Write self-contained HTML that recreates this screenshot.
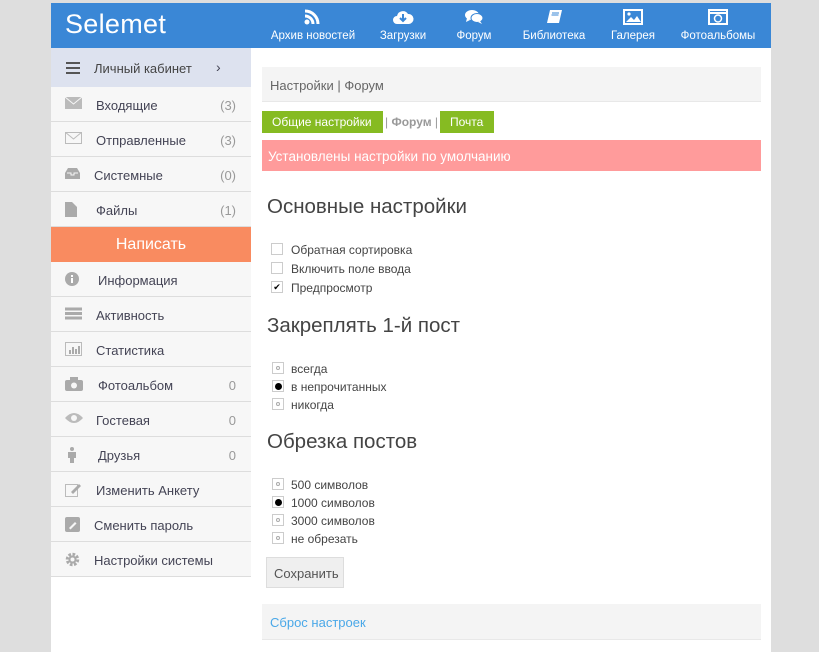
<!DOCTYPE html><html><head><meta charset="utf-8"><style>
*{box-sizing:border-box;margin:0;padding:0}
body{width:819px;height:652px;background:#dedede;font-family:"Liberation Sans",sans-serif;position:relative;overflow:hidden;color:#555}
.a{position:absolute}
#hdr{left:51px;top:3px;width:720px;height:45px;background:#3a87d6}
#logo{left:14px;top:6px;color:#fff;font-size:27px;font-weight:normal;letter-spacing:.3px}
.nav{top:0;text-align:center;color:#fff;font-size:11.5px}
.nav svg{display:block;margin:6px auto 5px}
#side{left:51px;top:48px;width:200px;height:604px;background:#fff}
#main{left:251px;top:48px;width:520px;height:604px;background:#fff}
.row{position:absolute;left:0;width:200px;height:35px;background:#f7f7f7;border-bottom:1px solid #ddd;font-size:13px;color:#445}
.row span.t{position:absolute;left:45px;top:11px}
.row span.c{position:absolute;right:15px;top:11px;color:#999}
.row svg{position:absolute;left:14px;top:10px}
.cb{position:absolute;left:271px;width:12px;height:12px;border:1px solid #ccc;background:#fff;font-size:9px;line-height:10px;text-align:center;color:#000}
.rd{position:absolute;left:272px;width:12px;height:12px;border:1px solid #ccc;background:#fff}
.rd i{position:absolute;left:3px;top:3px;width:4px;height:4px;border:1px solid #aaa;border-radius:50%}
.rd b{position:absolute;left:2px;top:2px;width:7px;height:7px;background:#000;border-radius:50%}
.lb{position:absolute;left:291px;font-size:12px;color:#444}
h2{position:absolute;left:267px;font-weight:normal;font-size:20.5px;color:#444}
</style></head><body>
<div class="a" id="hdr">
<div class="a" id="logo">Selemet</div>
<div class="a nav" style="left:212px;width:100px"><svg width="18" height="16" viewBox="0 0 18 16"><circle cx="3" cy="13" r="2.5" fill="#fff"/><path d="M1 7a8 8 0 0 1 8 8M1 2a13 13 0 0 1 13 13" stroke="#fff" stroke-width="3" fill="none"/></svg>Архив новостей</div>
<div class="a nav" style="left:322px;width:60px"><svg width="22" height="16" viewBox="0 0 22 16"><path d="M5 15a4 4 0 0 1 0-8a6 6 0 0 1 11-2a5 5 0 0 1 1 10z" fill="#fff"/><path d="M11 5v6M8 9l3 3 3-3" stroke="#3a87d6" stroke-width="2" fill="none"/></svg>Загрузки</div>
<div class="a nav" style="left:398px;width:50px"><svg width="20" height="16" viewBox="0 0 20 16"><ellipse cx="8" cy="6" rx="7" ry="5" fill="#fff"/><ellipse cx="13" cy="9" rx="6" ry="4.5" fill="#fff" stroke="#3a87d6" stroke-width="1"/><path d="M3 9l-1 4 4-2M16 12l2 3-4-2" fill="#fff"/></svg>Форум</div>
<div class="a nav" style="left:468px;width:70px"><svg width="18" height="16" viewBox="0 0 18 16"><path d="M5 1h12l-3 13H2z" fill="#fff"/><path d="M7 4h7M6.5 6h7" stroke="#3a87d6"/></svg>Библиотека</div>
<div class="a nav" style="left:557px;width:50px"><svg width="20" height="16" viewBox="0 0 20 16"><rect x="1" y="1" width="18" height="14" fill="none" stroke="#fff" stroke-width="2"/><circle cx="6" cy="5" r="1.6" fill="#fff"/><path d="M3 13l5-5 3 3 3-4 4 6z" fill="#fff"/></svg>Галерея</div>
<div class="a nav" style="left:627px;width:80px"><svg width="20" height="16" viewBox="0 0 20 16"><rect x="1" y="1" width="18" height="14" fill="none" stroke="#fff" stroke-width="2"/><path d="M1 4h18" stroke="#fff" stroke-width="2"/><circle cx="10" cy="9.5" r="3.5" fill="none" stroke="#fff" stroke-width="1.5"/></svg>Фотоальбомы</div>
</div>
<div class="a" id="side">
<div class="row" style="top:0;height:39px;background:#dde2ef;border:none"><svg width="14" height="12" style="left:15px;top:14px"><path d="M0 1h14M0 6h14M0 11h14" stroke="#555" stroke-width="2"/></svg><span class="t" style="left:43px;top:13px;color:#444">Личный кабинет</span><span class="a" style="left:165px;top:11px;font-size:14px">›</span></div>
<div class="row" style="top:39px"><svg width="17" height="12"><rect width="17" height="12" fill="#bbb"/><path d="M0 0l8.5 7 8.5-7" stroke="#f7f7f7" fill="none"/></svg><span class="t">Входящие</span><span class="c">(3)</span></div>
<div class="row" style="top:74px"><svg width="17" height="12"><rect x=".5" y=".5" width="16" height="11" fill="none" stroke="#bbb"/><path d="M0 0l8.5 7 8.5-7" stroke="#bbb" fill="none"/></svg><span class="t">Отправленные</span><span class="c">(3)</span></div>
<div class="row" style="top:109px"><svg width="15" height="13"><path d="M0 6l3-5h9l3 5v6H0z" fill="#aaa"/><path d="M2 6h4v2h3V6h4" stroke="#f7f7f7" fill="none"/></svg><span class="t" style="left:43px">Системные</span><span class="c">(0)</span></div>
<div class="row" style="top:144px"><svg width="12" height="15"><path d="M0 0h7l5 5v10H0z" fill="#aaa"/></svg><span class="t">Файлы</span><span class="c">(1)</span></div>
<div class="row" style="top:179px;background:#f98b60;border:none"><span class="a" style="left:0;width:200px;text-align:center;top:9px;font-size:16px;color:#fff">Написать</span></div>
<div class="row" style="top:214px"><svg width="14" height="14"><circle cx="7" cy="7" r="7" fill="#aaa"/><rect x="6" y="6" width="2" height="5" fill="#fff"/><rect x="6" y="3" width="2" height="2" fill="#fff"/></svg><span class="t" style="left:47px">Информация</span></div>
<div class="row" style="top:249px"><svg width="17" height="13"><path d="M0 2h17M0 6.5h17M0 11h17" stroke="#aaa" stroke-width="3"/></svg><span class="t">Активность</span></div>
<div class="row" style="top:284px"><svg width="17" height="14"><rect x=".5" y=".5" width="16" height="13" fill="none" stroke="#bbb"/><path d="M5 12V8M8 12V5M11 12V7M14 12V4" stroke="#aaa" stroke-width="2"/></svg><span class="t">Статистика</span></div>
<div class="row" style="top:319px"><svg width="18" height="14"><rect y="3" width="18" height="11" rx="2" fill="#aaa"/><rect x="5" y="0" width="8" height="4" fill="#aaa"/><circle cx="9" cy="8.5" r="3" fill="#f7f7f7"/></svg><span class="t" style="left:47px">Фотоальбом</span><span class="c">0</span></div>
<div class="row" style="top:354px"><svg width="18" height="12"><path d="M0 6q9-10 18 0q-9 10-18 0z" fill="#bbb"/><circle cx="9" cy="6" r="3" fill="#f7f7f7"/></svg><span class="t">Гостевая</span><span class="c">0</span></div>
<div class="row" style="top:389px"><svg width="10" height="16" style="left:16px"><circle cx="5" cy="2" r="2" fill="#aaa"/><path d="M1 5h8v6H7v5H3v-5H1z" fill="#aaa"/></svg><span class="t" style="left:47px">Друзья</span><span class="c">0</span></div>
<div class="row" style="top:424px"><svg width="17" height="15"><rect x=".5" y="2.5" width="12" height="12" fill="none" stroke="#bbb"/><path d="M6 10l8-8 2 2-8 8z" fill="#aaa"/></svg><span class="t">Изменить Анкету</span></div>
<div class="row" style="top:459px"><svg width="15" height="15"><rect width="15" height="15" rx="2" fill="#aaa"/><path d="M4 11l6-6 1.5 1.5-6 6z" fill="#f7f7f7"/></svg><span class="t" style="left:43px">Сменить пароль</span></div>
<div class="row" style="top:494px"><svg width="15" height="15"><circle cx="7.5" cy="7.5" r="5" fill="none" stroke="#aaa" stroke-width="3.5" stroke-dasharray="2.5 1.4"/><circle cx="7.5" cy="7.5" r="4" fill="#aaa"/><circle cx="7.5" cy="7.5" r="2" fill="#f7f7f7"/></svg><span class="t" style="left:43px">Настройки системы</span></div>
</div>
<div class="a" id="main"></div>
<div class="a" style="left:262px;top:67px;width:499px;height:35px;background:#f4f4f4;border-bottom:1px solid #e8e8e8;font-size:13px;color:#666;padding:11px 8px">Настройки | Форум</div>
<div class="a" style="left:262px;top:111px;width:121px;height:22px;background:#86bb22;color:#fff;font-size:12px;padding:4px 10px">Общие настройки</div>
<div class="a" style="left:385px;top:115px;font-size:12px;color:#999"> | <b>Форум</b> |</div>
<div class="a" style="left:440px;top:111px;width:54px;height:22px;background:#86bb22;color:#fff;font-size:12px;padding:4px 10px">Почта</div>
<div class="a" style="left:262px;top:140px;width:499px;height:31px;background:#ff9b9b;color:#fff;font-size:13.5px;padding:9px 6px">Установлены настройки по умолчанию</div>
<h2 style="top:195px">Основные настройки</h2>
<div class="cb" style="top:243px"></div><div class="lb" style="top:243px">Обратная сортировка</div>
<div class="cb" style="top:262px"></div><div class="lb" style="top:262px">Включить поле ввода</div>
<div class="cb" style="top:281px">✔</div><div class="lb" style="top:281px">Предпросмотр</div>
<h2 style="top:314px">Закреплять 1-й пост</h2>
<div class="rd" style="top:362px"><i></i></div><div class="lb" style="top:362px">всегда</div>
<div class="rd" style="top:380px"><b></b></div><div class="lb" style="top:380px">в непрочитанных</div>
<div class="rd" style="top:398px"><i></i></div><div class="lb" style="top:398px">никогда</div>
<h2 style="top:430px">Обрезка постов</h2>
<div class="rd" style="top:478px"><i></i></div><div class="lb" style="top:478px">500 символов</div>
<div class="rd" style="top:496px"><b></b></div><div class="lb" style="top:496px">1000 символов</div>
<div class="rd" style="top:514px"><i></i></div><div class="lb" style="top:514px">3000 символов</div>
<div class="rd" style="top:532px"><i></i></div><div class="lb" style="top:532px">не обрезать</div>
<div class="a" style="left:266px;top:557px;width:78px;height:31px;background:#efefef;border:1px solid #ddd;font-size:13px;color:#555;padding:8px 7px">Сохранить</div>
<div class="a" style="left:262px;top:604px;width:499px;height:36px;background:#f4f4f4;border-bottom:1px solid #e8e8e8;font-size:13px;color:#4aa8e8;padding:11px 8px">Сброс настроек</div>
</body></html>
